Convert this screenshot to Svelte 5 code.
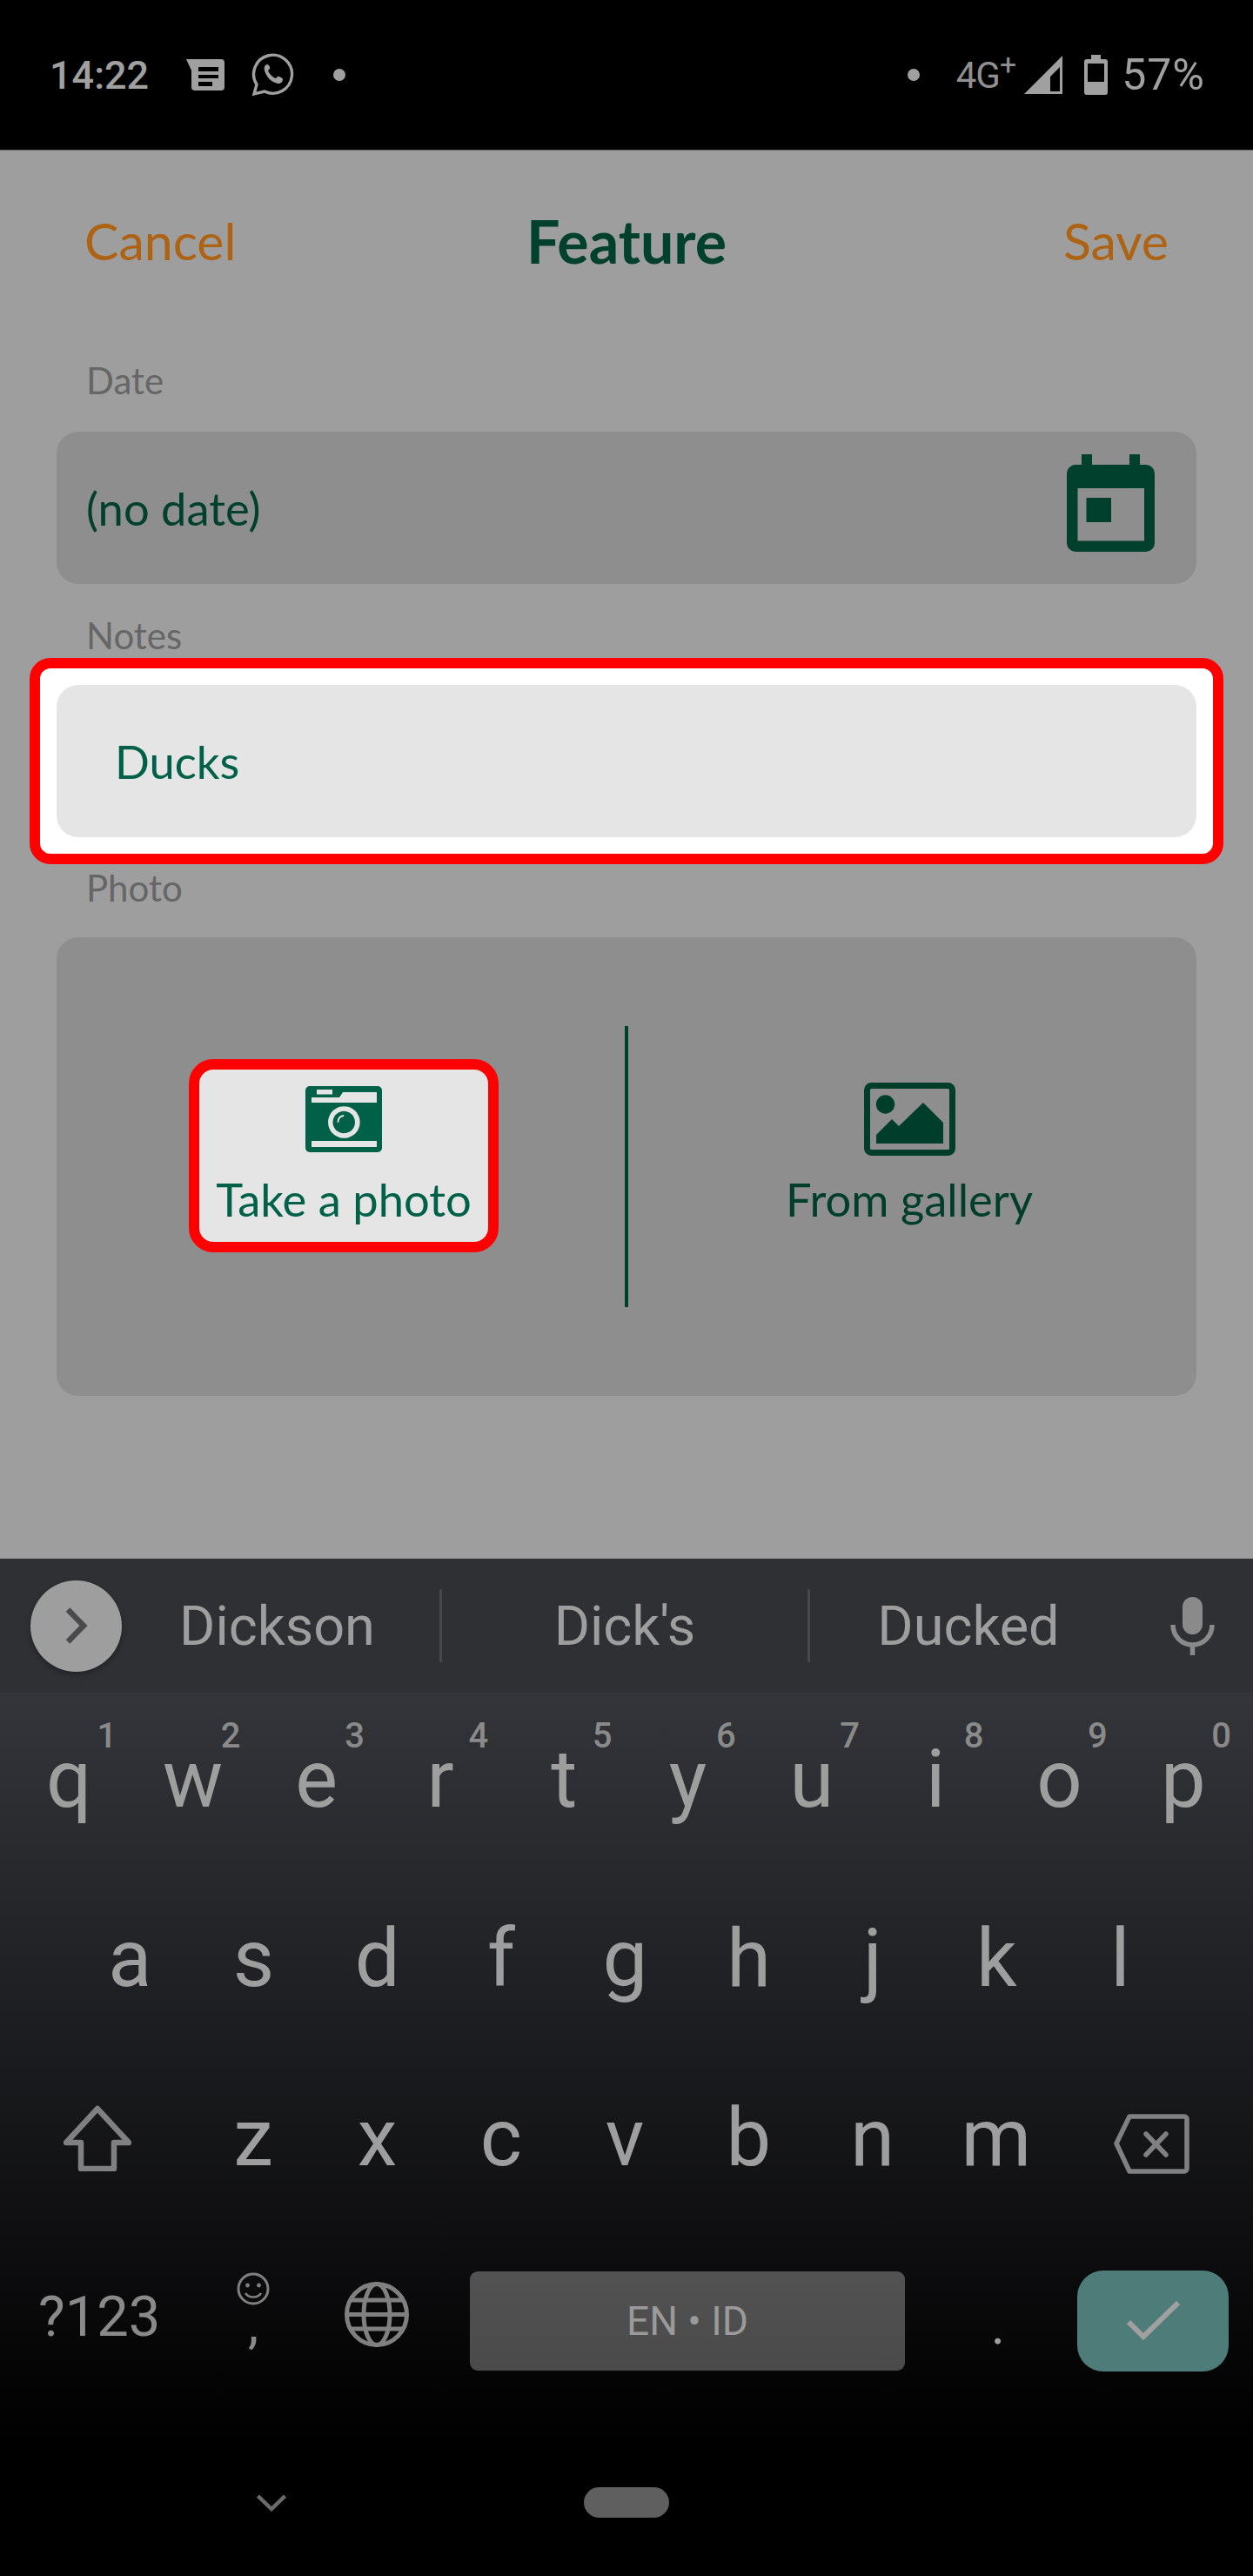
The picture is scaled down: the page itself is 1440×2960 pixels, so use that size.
<script lang="ts">
  const row1 = [
    ["q", "1"], ["w", "2"], ["e", "3"], ["r", "4"], ["t", "5"],
    ["y", "6"], ["u", "7"], ["i", "8"], ["o", "9"], ["p", "0"],
  ];
  const row2 = ["a", "s", "d", "f", "g", "h", "j", "k", "l"];
  const row3 = ["z", "x", "c", "v", "b", "n", "m"];
</script>

<div class="phone">
  <header class="status">
    <div class="status-left">
      <span class="clock">14:22</span>
      <svg class="ic-msg" viewBox="0 0 44 36" aria-hidden="true">
        <path fill="#a0a0a0" fill-rule="evenodd" d="M0 0H40a4 4 0 0 1 4 4V32a4 4 0 0 1-4 4H10a4 4 0 0 1-4-4V13ZM14 9V14H37V9ZM14 18V22H37V18ZM14 26V31H30V26Z" />
      </svg>
      <svg class="ic-wa" viewBox="0 0 50 50" aria-hidden="true">
        <path fill="none" stroke="#a0a0a0" stroke-width="3.4" d="M3 47l3-11A22 22 0 1 1 15 44Z" />
        <path fill="#a0a0a0" d="M18 13c-2 0-4 3-3 7 2 7 7 13 15 15 4 0 6-2 6-5 0-1-5-4-6-3l-2 2c-4-1-8-6-9-9l2-2c1-1-1-5-3-5Z" />
      </svg>
      <i class="dot"></i>
    </div>
    <div class="status-right">
      <i class="dot"></i>
      <span class="net">4G<sup>+</sup></span>
      <svg class="ic-signal" viewBox="0 0 44 44" aria-hidden="true">
        <path fill="#a0a0a0" fill-rule="evenodd" d="M44 0V44H0ZM41 13 30 24V41H41Z" />
      </svg>
      <svg class="ic-batt" viewBox="0 0 27 46" aria-hidden="true">
        <path fill="#a0a0a0" fill-rule="evenodd" d="M8 0H19V5H24a3 3 0 0 1 3 3V43a3 3 0 0 1-3 3H3a3 3 0 0 1-3-3V8a3 3 0 0 1 3-3H8ZM4 10V31H23V10Z" />
      </svg>
      <span class="pct">57%</span>
    </div>
  </header>

  <main class="app">
    <div class="topbar">
      <span class="action">Cancel</span>
      <h1>Feature</h1>
      <span class="action">Save</span>
    </div>

    <form class="form">
      <label class="caption date-caption" for="date">Date</label>
      <div class="field" id="date">
        <span class="dark">(no date)</span>
        <svg class="ic-cal" viewBox="0 0 101 112" aria-hidden="true">
          <path fill="#00402c" fill-rule="evenodd" d="M17 0H29V12H72V0H84V12H91a10 10 0 0 1 10 10V102a10 10 0 0 1-10 10H10A10 10 0 0 1 0 102V22A10 10 0 0 1 10 12H17ZM12.500 39V99.500H89V39ZM22.500 50H51V78H22.500Z" />
        </svg>
      </div>

      <label class="caption notes-caption" for="notes">Notes</label>
      <div class="spotlight">
        <div class="field light" id="notes">Ducks</div>
      </div>

      <span class="caption photo-caption">Photo</span>
      <div class="photo-panel">
        <div class="pick-side left">
          <button type="button" class="pick take">
            <svg class="ic-cam" viewBox="0 0 88 76" aria-hidden="true">
              <path fill="#006148" fill-rule="evenodd" d="M5 0H83a5 5 0 0 1 5 5V71a5 5 0 0 1-5 5H5a5 5 0 0 1-5-5V5a5 5 0 0 1 5-5ZM13 4V9.500H31V4ZM7 13V19H82V7H43L39 13ZM7 63V70H82V63ZM44.300 23.200A18.300 18.300 0 1 0 44.400 23.200ZM44.300 28.700A12.800 12.800 0 1 1 44.200 28.700Z" />
              <path fill="none" stroke="#e5e5e5" stroke-width="1.800" stroke-linecap="round" d="M37.500 41a7.500 7.500 0 0 1 6-7" />
            </svg>
            <span>Take a photo</span>
          </button>
        </div>
        <i class="rule"></i>
        <div class="pick-side right">
          <button type="button" class="pick">
            <svg class="ic-gal" viewBox="0 0 105 84" aria-hidden="true">
              <rect x="3.500" y="3.500" width="98" height="77" rx="5" fill="none" stroke="#003d2a" stroke-width="7" />
              <circle cx="24.500" cy="25" r="10.700" fill="#003d2a" />
              <path fill="#003d2a" d="M14 60 32 42 40 50 68 23 91 46V70H14Z" />
            </svg>
            <span>From gallery</span>
          </button>
        </div>
      </div>
    </form>
  </main>

  <section class="keyboard">
    <div class="suggestions">
      <span class="more">
        <svg viewBox="0 0 26 42" aria-hidden="true">
          <path fill="none" stroke="#4a4a4c" stroke-width="6.500" d="M3 2.500 21 21 3 39.500" />
        </svg>
      </span>
      <span class="word first">Dickson</span>
      <i class="sep"></i>
      <span class="word">Dick's</span>
      <i class="sep"></i>
      <span class="word">Ducked</span>
      <svg class="ic-mic" viewBox="0 0 51 67" aria-hidden="true">
        <rect x="14" y="0" width="23" height="43" rx="11.500" fill="#8a8a8a" />
        <path fill="none" stroke="#8a8a8a" stroke-width="5.500" d="M3 32c0 13 10 23 22.500 23S48 45 48 32M25.500 55V67" />
      </svg>
    </div>

    <div class="keys">
      <div class="row first-row">
        {#each row1 as [key, num]}
          <span class="key">{key}<small>{num}</small></span>
        {/each}
      </div>
      <div class="row second-row">
        {#each row2 as key}
          <span class="key">{key}</span>
        {/each}
      </div>
      <div class="row third-row">
        <svg class="ic-shift" viewBox="0 0 78 76" aria-hidden="true">
          <path fill="none" stroke="#808080" stroke-width="6.500" stroke-linejoin="round" d="M39 4 75 43 58 43V73H20V43H3Z" />
        </svg>
        {#each row3 as key}
          <span class="key">{key}</span>
        {/each}
        <svg class="ic-back" viewBox="0 0 87 69" aria-hidden="true">
          <path fill="none" stroke="#808080" stroke-width="5.500" stroke-linejoin="round" d="M18 3H81a3 3 0 0 1 3 3V63a3 3 0 0 1-3 3H18L3 34Z" />
          <path fill="none" stroke="#808080" stroke-width="5.500" stroke-linecap="round" d="M37 23 60 47M60 23 37 47" />
        </svg>
      </div>
      <div class="row bottom-row">
        <span class="sym">?123</span>
        <span class="comma">
          <svg viewBox="0 0 38 38" aria-hidden="true">
            <circle cx="19" cy="19" r="17" fill="none" stroke="#808080" stroke-width="3" />
            <circle cx="12.500" cy="15" r="2.400" fill="#808080" />
            <circle cx="25.500" cy="15" r="2.400" fill="#808080" />
            <path fill="none" stroke="#808080" stroke-width="2.600" d="M10 24c4 6 14 6 18 0" />
          </svg>
          <b>,</b>
        </span>
        <svg class="ic-globe" viewBox="0 0 74 75" aria-hidden="true">
          <g fill="none" stroke="#808080" stroke-width="5">
            <ellipse cx="37" cy="37.500" rx="34.500" ry="35" />
            <ellipse cx="37" cy="37.500" rx="15" ry="35" />
            <path d="M6 21H68M6 54H68M2.500 37.500H71.500" />
          </g>
        </svg>
        <span class="space">EN • ID</span>
        <span class="period">.</span>
        <span class="enter">
          <svg viewBox="0 0 61 46" aria-hidden="true">
            <path fill="none" stroke="#a0a0a0" stroke-width="6" d="M2 24 19 41 59 2" />
          </svg>
        </span>
      </div>
    </div>

    <nav class="navbar">
      <svg class="nav-down" viewBox="0 0 34 20" aria-hidden="true">
        <path fill="none" stroke="#6a6a6a" stroke-width="4.500" d="M1.500 2 17 17 32.500 2" />
      </svg>
      <i class="pill"></i>
    </nav>
  </section>
</div>

<style>
  :global(body) {
    margin: 0;
    background: #000;
  }

  i {
    display: block;
  }

  svg {
    display: block;
    flex: none;
  }

  .phone {
    width: 1440px;
    height: 2960px;
    display: flex;
    flex-direction: column;
    overflow: hidden;
    font-family: Lato, "Open Sans", sans-serif;
  }

  /* status bar */
  .status {
    height: 172px;
    flex: none;
    background: #000;
    color: #a0a0a0;
    font-family: Roboto, sans-serif;
    display: flex;
    justify-content: space-between;
    align-items: center;
    padding: 0 55px 0 57px;
    box-sizing: border-box;
  }

  .status-left,
  .status-right {
    display: flex;
    align-items: center;
  }

  .clock {
    font-size: 45px;
    font-weight: 500;
    margin-right: 43px;
  }

  .ic-msg {
    width: 44px;
    height: 36px;
    margin-right: 31px;
  }

  .ic-wa {
    width: 50px;
    height: 50px;
    margin-right: 44px;
  }

  .dot {
    width: 14px;
    height: 14px;
    border-radius: 50%;
    background: #a0a0a0;
  }

  .net {
    font-size: 42px;
    margin: 0 10px 0 42px;
    color: #909090;
    letter-spacing: -1px;
  }

  .net sup {
    font-size: 34px;
    line-height: 0;
  }

  .ic-signal {
    width: 44px;
    height: 44px;
    margin-right: 25px;
  }

  .ic-batt {
    width: 27px;
    height: 46px;
    margin-right: 16px;
  }

  .pct {
    font-size: 50px;
    letter-spacing: 1px;
  }

  /* form */
  .app {
    flex: 1;
    background: #9e9e9e;
    border-top: 1px solid #6a6a6a;
    box-sizing: border-box;
  }

  .topbar {
    display: grid;
    grid-template-columns: 1fr auto 1fr;
    align-items: center;
    padding: 68px 97px 0;
    color: #ad6312;
    font-size: 59px;
  }

  .topbar .action:last-child {
    text-align: right;
  }

  h1 {
    margin: 0;
    font-size: 68px;
    font-weight: 700;
    color: #00402c;
    line-height: 1;
  }

  .form {
    display: flex;
    flex-direction: column;
    padding: 0 65px;
  }

  .caption {
    font-size: 42px;
    line-height: 48px;
    color: #666;
    padding-left: 34px;
  }

  .date-caption {
    margin-top: 101px;
    margin-bottom: 35px;
  }

  .notes-caption {
    margin-top: 35px;
    margin-bottom: 2px;
  }

  .photo-caption {
    margin-top: 3px;
    margin-bottom: 33px;
  }

  .field {
    height: 175px;
    background: #8e8e8e;
    border-radius: 25px;
    display: flex;
    justify-content: space-between;
    align-items: center;
    padding: 0 48px 0 34px;
    font-size: 52.500px;
  }

  .dark {
    color: #00402c;
  }

  .ic-cal {
    width: 101px;
    height: 112px;
    margin-bottom: 11px;
  }

  .spotlight {
    margin: 0 -31px;
    border: 12px solid #f00;
    border-radius: 24px;
    background: #fff;
    padding: 19px;
  }

  .field.light {
    background: #e5e5e5;
    color: #006148;
    padding-left: 67px;
  }

  .photo-panel {
    height: 527px;
    background: #8e8e8e;
    border-radius: 25px;
    display: grid;
    grid-template-columns: 1fr 4px 1fr;
    align-items: center;
  }

  .pick-side {
    display: flex;
    justify-content: center;
    padding-bottom: 26px;
  }

  .pick-side.left {
    padding-left: 7px;
  }

  .pick-side.right {
    padding-right: 7px;
  }

  .pick {
    width: 356px;
    display: flex;
    flex-direction: column;
    align-items: center;
    gap: 24px;
    padding: 19px 0;
    border: 12px solid transparent;
    background: none;
    font: inherit;
    font-size: 52.500px;
    line-height: 60px;
    color: #003d2a;
    white-space: nowrap;
  }

  .pick.take {
    background: #e5e5e5;
    color: #006148;
    border-color: #f00;
    border-radius: 28px;
  }

  .ic-cam {
    width: 88px;
    height: 76px;
  }

  .ic-gal {
    width: 105px;
    height: 84px;
    margin: -4px 0;
  }

  .rule {
    height: 323px;
    background: #00402c;
  }

  /* keyboard */
  .keyboard {
    height: 1169px;
    flex: none;
    display: flex;
    flex-direction: column;
    font-family: Roboto, sans-serif;
    color: #9e9e9e;
    background: linear-gradient(#33353a 154px, #000 1010px);
  }

  .suggestions {
    height: 154px;
    flex: none;
    background: #2f3034;
    display: grid;
    grid-template-columns: 105px 365px 3px 420px 3px 364px 1fr;
    align-items: center;
    padding: 0 44px 0 35px;
    box-sizing: border-box;
  }

  .more {
    width: 105px;
    height: 105px;
    border-radius: 50%;
    background: #9e9e9e;
    display: flex;
    align-items: center;
    justify-content: center;
    box-shadow: 0 3px 6px rgba(0, 0, 0, 0.3);
  }

  .more svg {
    width: 26px;
    height: 42px;
  }

  .word {
    font-size: 63px;
    text-align: center;
  }

  .word.first {
    padding-right: 8px;
  }

  .sep {
    height: 84px;
    background: #47484b;
  }

  .ic-mic {
    width: 51px;
    height: 67px;
    justify-self: end;
  }

  .keys {
    flex: 1;
    display: flex;
    flex-direction: column;
    margin-top: -3px;
  }

  .row {
    height: 206px;
    display: flex;
    align-items: center;
    flex: none;
  }

  .first-row {
    padding-left: 8px;
  }

  .second-row {
    padding-left: 78px;
  }

  .third-row {
    padding-left: 73px;
  }

  .key {
    width: 142.300px;
    text-align: center;
    font-size: 92px;
    line-height: 108px;
    position: relative;
  }

  .key small {
    position: absolute;
    top: -20px;
    right: 16px;
    font-size: 40px;
    line-height: 48px;
    font-weight: 500;
    color: #8a8a8a;
  }

  .ic-shift {
    width: 78px;
    height: 76px;
    margin-right: 69px;
  }

  .ic-back {
    width: 87px;
    height: 69px;
    margin-left: 64px;
    margin-top: 12px;
  }

  .bottom-row {
    height: 116px;
    margin-top: 49px;
    padding-left: 44px;
  }

  .sym {
    font-size: 65px;
    color: #8a8a8a;
    width: 228px;
    margin-bottom: 10px;
  }

  .comma {
    width: 38px;
    margin-right: 86px;
    align-self: flex-start;
    margin-top: 2px;
    display: flex;
    flex-direction: column;
    align-items: center;
    color: #8a8a8a;
  }

  .comma svg {
    width: 38px;
    height: 38px;
  }

  .comma b {
    font-weight: 400;
    font-size: 62px;
    line-height: 50px;
    margin-top: -3px;
  }

  .ic-globe {
    width: 74px;
    height: 75px;
    margin-right: 70px;
    margin-bottom: 15px;
  }

  .space {
    width: 500px;
    height: 114px;
    background: linear-gradient(#525252, #4a4a4a);
    border-radius: 9px;
    display: flex;
    align-items: center;
    justify-content: center;
    font-size: 46px;
    color: #9a9a9a;
  }

  .period {
    font-size: 62px;
    width: 182px;
    padding-left: 16px;
    text-align: center;
    line-height: 60px;
    padding-top: 10px;
  }

  .enter {
    width: 174px;
    height: 116px;
    background: #4e7c78;
    border-radius: 30px;
    display: flex;
    align-items: center;
    justify-content: center;
  }

  .enter svg {
    width: 61px;
    height: 46px;
  }

  .navbar {
    height: 99px;
    flex: none;
    margin-bottom: 35px;
    display: flex;
    align-items: center;
    padding-left: 295px;
  }

  .nav-down {
    width: 34px;
    height: 20px;
    margin-right: 342px;
  }

  .pill {
    width: 98px;
    height: 35px;
    border-radius: 18px;
    background: #5f5f5f;
  }
</style>
